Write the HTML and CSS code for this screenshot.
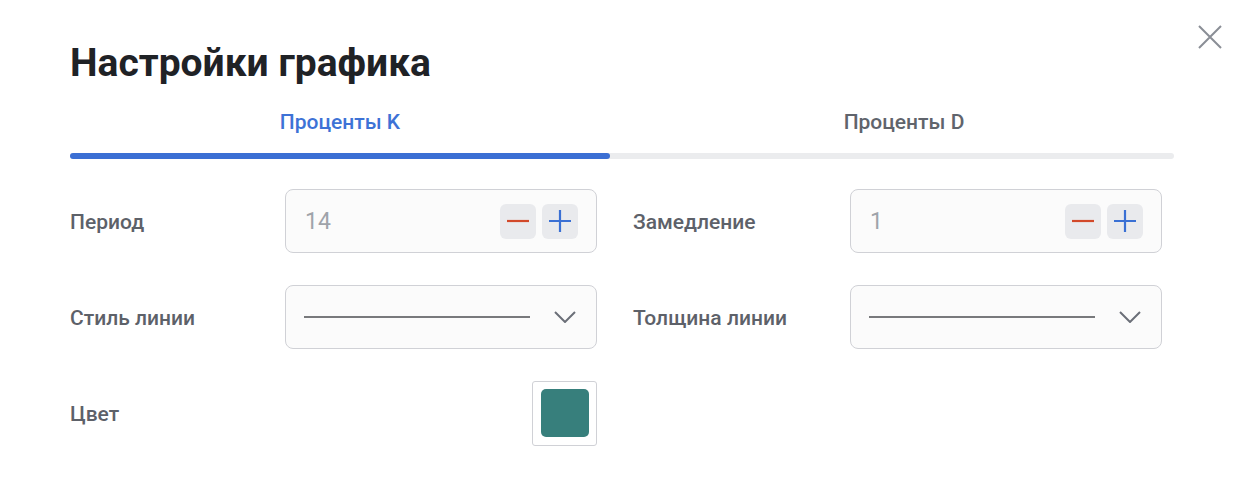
FILE: index.html
```html
<!DOCTYPE html>
<html lang="ru">
<head>
<meta charset="utf-8">
<title>Настройки графика</title>
<link rel="stylesheet" href="styles.css">
</head>
<body>
<div class="dialog">
  <button class="close" aria-label="Закрыть">
    <svg width="24" height="24" viewBox="0 0 24 24"><path d="M1 1L23 23M23 1L1 23" stroke="#8a8e96" stroke-width="2" fill="none"/></svg>
  </button>
  <h1 class="title">Настройки графика</h1>
  <div class="tabs">
    <div class="tab active">Проценты K</div>
    <div class="tab">Проценты D</div>
  </div>
  <div class="track"><div class="indicator"></div></div>
  <div class="form">
    <div class="field">
      <span class="label">Период</span>
      <div class="input">
        <span class="value">14</span>
        <div class="steppers">
          <span class="step"><svg width="24" height="24" viewBox="0 0 24 24"><path d="M1 12H23" stroke="#d2492a" stroke-width="2.2"/></svg></span>
          <span class="step"><svg width="24" height="24" viewBox="0 0 24 24"><path d="M1 12H23M12 1V23" stroke="#3a70d4" stroke-width="2.2"/></svg></span>
        </div>
      </div>
    </div>
    <div class="field">
      <span class="label">Замедление</span>
      <div class="input">
        <span class="value">1</span>
        <div class="steppers">
          <span class="step"><svg width="24" height="24" viewBox="0 0 24 24"><path d="M1 12H23" stroke="#d2492a" stroke-width="2.2"/></svg></span>
          <span class="step"><svg width="24" height="24" viewBox="0 0 24 24"><path d="M1 12H23M12 1V23" stroke="#3a70d4" stroke-width="2.2"/></svg></span>
        </div>
      </div>
    </div>
    <div class="field">
      <span class="label">Стиль линии</span>
      <div class="input select">
        <span class="line"></span>
        <svg class="chev" width="22" height="12" viewBox="0 0 22 12"><path d="M1 1L11 11L21 1" stroke="#6b6f78" stroke-width="2" fill="none"/></svg>
      </div>
    </div>
    <div class="field">
      <span class="label">Толщина линии</span>
      <div class="input select">
        <span class="line"></span>
        <svg class="chev" width="22" height="12" viewBox="0 0 22 12"><path d="M1 1L11 11L21 1" stroke="#6b6f78" stroke-width="2" fill="none"/></svg>
      </div>
    </div>
    <div class="field">
      <span class="label">Цвет</span>
      <div class="color"><span class="swatch"></span></div>
    </div>
  </div>
</div>
</body>
</html>
```

FILE: styles.css
```css
* { box-sizing: border-box; }
html, body { margin: 0; padding: 0; background: #ffffff; }
body { font-family: Roboto, "Noto Sans", Arial, sans-serif; }
.dialog {
  position: relative;
  width: 1244px;
  height: 488px;
  padding: 43px 70px 0 70px;
}
.close {
  position: absolute;
  top: 25px;
  left: 1198px;
  width: 24px;
  height: 24px;
  padding: 0;
  border: 0;
  background: none;
  display: block;
}
.close svg { display: block; }
.title {
  margin: 0;
  font-size: 39px;
  line-height: 40px;
  font-weight: 700;
  color: #1f2226;
}
.tabs {
  display: flex;
  gap: 24px;
  margin-top: 27px;
}
.tab {
  flex: 1;
  text-align: center;
  font-size: 21px;
  line-height: 24px;
  font-weight: 500;
  color: #60646c;
}
.tab.active { color: #3d72d6; }
.track {
  margin-top: 19px;
  height: 6px;
  border-radius: 3px;
  background: #ebecee;
}
.indicator {
  width: calc((100% - 24px) / 2);
  height: 6px;
  border-radius: 3px;
  background: #3b6fd4;
}
.form {
  display: grid;
  grid-template-columns: 527px 529px;
  column-gap: 36px;
  row-gap: 32px;
  margin-top: 30px;
}
.field {
  display: flex;
  align-items: center;
  justify-content: space-between;
  height: 64px;
}
.label {
  font-size: 21px;
  font-weight: 500;
  color: #5d6169;
  padding-top: 2px;
}
.input {
  width: 312px;
  height: 64px;
  border: 1px solid #d0d1d6;
  border-radius: 8px;
  background: #fbfbfb;
  display: flex;
  align-items: center;
  justify-content: space-between;
  padding: 0 18px 0 19px;
}
.value {
  font-size: 23px;
  color: #9fa3aa;
  padding-top: 1px;
}
.steppers { display: flex; gap: 6px; }
.step {
  width: 36px;
  height: 35px;
  border-radius: 6px;
  background: #e9eaed;
  display: flex;
  align-items: center;
  justify-content: center;
}
.step svg { display: block; }
.select { padding: 0 20px 0 18px; }
.line {
  width: 226px;
  height: 2px;
  background: #78797c;
}
.chev { display: block; }
.color {
  width: 65px;
  height: 65px;
  border: 1px solid #d0d1d6;
  border-radius: 3px;
  background: #ffffff;
  display: flex;
  align-items: center;
  justify-content: center;
}
.swatch {
  width: 48px;
  height: 48px;
  border-radius: 5px;
  background: #377f7c;
}
```
